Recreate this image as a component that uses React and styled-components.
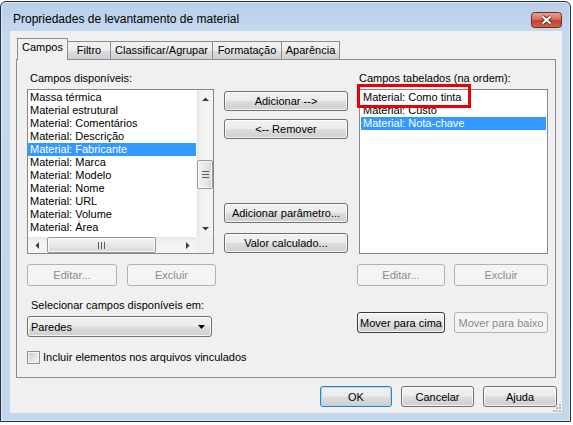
import React from "react"
import styled, { createGlobalStyle, css } from 'styled-components'

const tabs = [
    { label: "Campos", w: 51 },
    { label: "Filtro", w: 44 },
    { label: "Classificar/Agrupar", w: 103 },
    { label: "Formatação", w: 70 },
    { label: "Aparência", w: 59 },
]

const available = [
    "Massa térmica",
    "Material estrutural",
    "Material: Comentários",
    "Material: Descrição",
    "Material: Fabricante",
    "Material: Marca",
    "Material: Modelo",
    "Material: Nome",
    "Material: URL",
    "Material: Volume",
    "Material: Área",
]

const scheduled = ["Material: Como tinta", "Material: Custo", "Material: Nota-chave"]

const arrows = {
    up: "M0 4 L3.5 0.5 L7 4 Z",
    down: "M0 0 L7 0 L3.5 3.5 Z",
    left: "M4 0 L4 7 L0.5 3.5 Z",
    right: "M0 0 L3.5 3.5 L0 7 Z",
}

const Arrow = ({ dir }) => {
    const vertical = dir === "up" || dir === "down"
    return (
        <ArrowBox>
            <svg width={vertical ? 7 : 4} height={vertical ? 4 : 7}>
                <path d={arrows[dir]} fill="#3a3a3a" />
            </svg>
        </ArrowBox>
    )
}

const App = () => {
    return (
        <>
            <GlobalStyle />
            <Window>
                <TitleBar>
                    <Title>Propriedades de levantamento de material</Title>
                    <CloseButton aria-label="Fechar">
                        <svg width="31" height="16" viewBox="0 0 31 16">
                            <defs>
                                <linearGradient id="closeFill" x1="0" y1="0" x2="0" y2="1">
                                    <stop offset="0" stopColor="#e8a597" />
                                    <stop offset="0.45" stopColor="#d6705e" />
                                    <stop offset="0.55" stopColor="#c5412c" />
                                    <stop offset="1" stopColor="#d0654c" />
                                </linearGradient>
                            </defs>
                            <rect x="0.5" y="0.5" width="30" height="15" rx="3" fill="url(#closeFill)" stroke="#6e2b22" />
                            <path d="M11.5 4.5 L19.5 11.5 M19.5 4.5 L11.5 11.5" stroke="#5a2f2a" strokeWidth="4" />
                            <path d="M11.5 4.5 L19.5 11.5 M19.5 4.5 L11.5 11.5" stroke="#ffffff" strokeWidth="2.2" />
                        </svg>
                    </CloseButton>
                </TitleBar>

                <Client>
                    <TabStrip>
                        {tabs.map((t, i) => (
                            <Tab key={t.label} $active={i === 0} $w={t.w}>{t.label}</Tab>
                        ))}
                    </TabStrip>

                    <Pane>
                        <LeftCol>
                            <Label $indent={3}>Campos disponíveis:</Label>
                            <ListBox $w={187} $scroll>
                                <Items>
                                    {available.map(item => (
                                        <Item key={item} $selected={item === "Material: Fabricante"}>{item}</Item>
                                    ))}
                                </Items>
                                <VScroll>
                                    <Arrow dir="up" />
                                    <VTrack>
                                        <VThumb>
                                            <svg width="7" height="7">
                                                <path d="M0 0.5 H7 M0 3.5 H7 M0 6.5 H7" stroke="#5c5c5c" />
                                            </svg>
                                        </VThumb>
                                    </VTrack>
                                    <Arrow dir="down" />
                                </VScroll>
                                <HScroll>
                                    <Arrow dir="left" />
                                    <HTrack>
                                        <HThumb>
                                            <svg width="7" height="7">
                                                <path d="M0.5 0 V7 M3.5 0 V7 M6.5 0 V7" stroke="#5c5c5c" />
                                            </svg>
                                        </HThumb>
                                    </HTrack>
                                    <Arrow dir="right" />
                                </HScroll>
                                <Corner />
                            </ListBox>

                            <ButtonRow $gap={10}>
                                <Button $w={90} $h={22} disabled>Editar...</Button>
                                <Button $w={89} $h={22} disabled>Excluir</Button>
                            </ButtonRow>

                            <Label $indent={4} $top={12}>Selecionar campos disponíveis em:</Label>
                            <Combo>
                                <span>Paredes</span>
                                <svg width="7" height="4">
                                    <path d="M0 0 H7 L3.5 4 Z" fill="#000" />
                                </svg>
                            </Combo>

                            <CheckRow>
                                <CheckBox />
                                <span>Incluir elementos nos arquivos vinculados</span>
                            </CheckRow>
                        </LeftCol>

                        <MidCol>
                            <Button $w={124} $h={20}>Adicionar --&gt;</Button>
                            <Button $w={124} $h={20} $top={8}>&lt;-- Remover</Button>
                            <Button $w={124} $h={20} $top={64}>Adicionar parâmetro...</Button>
                            <Button $w={124} $h={20} $top={10}>Valor calculado...</Button>
                        </MidCol>

                        <RightCol>
                            <Label $indent={2}>Campos tabelados (na ordem):</Label>
                            <RightListWrap>
                                <ListBox $w={189}>
                                    <Items $inset>
                                        {scheduled.map(item => (
                                            <Item key={item} $selected={item === "Material: Nota-chave"}>{item}</Item>
                                        ))}
                                    </Items>
                                </ListBox>
                                <Highlight />
                            </RightListWrap>

                            <ButtonRow $gap={9}>
                                <Button $w={88} $h={22} disabled>Editar...</Button>
                                <Button $w={94} $h={22} disabled>Excluir</Button>
                            </ButtonRow>

                            <ButtonRow $gap={9} $top={26}>
                                <Button $w={88} $h={21} $focus>Mover para cima</Button>
                                <Button $w={94} $h={21} disabled>Mover para baixo</Button>
                            </ButtonRow>
                        </RightCol>
                    </Pane>

                    <Footer>
                        <Button $w={72} $h={21} $default>OK</Button>
                        <Button $w={73} $h={21}>Cancelar</Button>
                        <Button $w={74} $h={21}>Ajuda</Button>
                    </Footer>

                    <Grip>
                        <svg width="9" height="9">
                            <g fill="#b9b9b9">
                                <rect x="7" y="1" width="2" height="2" />
                                <rect x="4" y="4" width="2" height="2" />
                                <rect x="7" y="4" width="2" height="2" />
                                <rect x="1" y="7" width="2" height="2" />
                                <rect x="4" y="7" width="2" height="2" />
                                <rect x="7" y="7" width="2" height="2" />
                            </g>
                        </svg>
                    </Grip>
                </Client>
            </Window>
        </>
    )
}

export default App

const GlobalStyle = createGlobalStyle`
    html, body {
        margin: 0;
        background: #ffffff;
    }
    body {
        font-family: "Liberation Sans", Arial, sans-serif;
        font-size: 11px;
        color: #000;
    }
`

const Window = styled.div`
    box-sizing: border-box;
    width: 571px;
    height: 421px;
    margin-top: 1px;
    display: flex;
    flex-direction: column;
    padding: 0 8px 8px 9px;
    border: 1px solid #27323f;
    border-radius: 6px 6px 0 0;
    background: linear-gradient(180deg, #b9cfe8 0, #c4d8ee 30px, #c2d6ec 100%);
    box-shadow: inset 0 0 0 1px rgba(255, 255, 255, 0.45);
`

const TitleBar = styled.div`
    height: 29px;
    display: flex;
    align-items: flex-start;
    justify-content: space-between;
`

const Title = styled.div`
    padding: 10px 0 0 3px;
    font-size: 12px;
    line-height: 14px;
`

const CloseButton = styled.div`
    margin-top: 10px;
    width: 31px;
    height: 16px;
    line-height: 0;
`

const Client = styled.div`
    position: relative;
    box-sizing: border-box;
    height: 382px;
    padding: 7px 6px 0 6px;
    background: #f0f0f0;
    display: flex;
    flex-direction: column;
`

const TabStrip = styled.div`
    height: 21px;
    display: flex;
    align-items: flex-end;
    padding-left: 1px;
`

const Tab = styled.div`
    box-sizing: border-box;
    width: ${props => props.$w}px;
    height: 18px;
    margin-left: -1px;
    border: 1px solid #898c95;
    border-bottom: none;
    background: linear-gradient(180deg, #f3f3f3 0%, #ebebeb 50%, #dddddd 51%, #cfcfcf 100%);
    text-align: center;
    line-height: 16px;
    white-space: nowrap;
    &:first-child {
        margin-left: 0;
    }
    ${props => props.$active && css`
        position: relative;
        z-index: 2;
        height: 22px;
        margin-bottom: -1px;
        background: #f0f0f0;
        line-height: 17px;
    `}
`

const Pane = styled.div`
    box-sizing: border-box;
    height: 319px;
    border: 1px solid #898c95;
    background: #f0f0f0;
    display: flex;
    align-items: flex-start;
    padding: 11px 0 0 10px;
`

const LeftCol = styled.div`
    width: 189px;
    display: flex;
    flex-direction: column;
`

const MidCol = styled.div`
    width: 124px;
    margin-left: 8px;
    padding-top: 20px;
    display: flex;
    flex-direction: column;
`

const RightCol = styled.div`
    width: 191px;
    margin-left: 9px;
    display: flex;
    flex-direction: column;
`

const Label = styled.div`
    height: 14px;
    line-height: 14px;
    padding-left: ${props => props.$indent || 0}px;
    margin-top: ${props => props.$top || 0}px;
    margin-bottom: 4px;
    white-space: nowrap;
`

const ListBox = styled.div`
    box-sizing: border-box;
    width: ${props => props.$w}px;
    height: 165px;
    border: 1px solid #828790;
    background: #ffffff;
    display: grid;
    grid-template-columns: ${props => props.$scroll ? "1fr 17px" : "1fr"};
    grid-template-rows: ${props => props.$scroll ? "1fr 16px" : "1fr"};
    overflow: hidden;
`

const Items = styled.div`
    padding: 1px ${props => props.$inset ? "1px" : "0"} 0;
    overflow: hidden;
`

const Item = styled.div`
    height: 13px;
    line-height: 13px;
    padding-left: 2px;
    white-space: nowrap;
    ${props => props.$selected && css`
        background: #3399ff;
        color: #ffffff;
    `}
`

const VScroll = styled.div`
    display: flex;
    flex-direction: column;
    background: linear-gradient(90deg, #e6e6e6 0, #f2f2f2 30%, #f4f4f4 100%);
    border-left: 1px solid #f7f7f7;
`

const HScroll = styled.div`
    display: flex;
    background: linear-gradient(180deg, #e6e6e6 0, #f2f2f2 30%, #f4f4f4 100%);
`

const ArrowBox = styled.div`
    flex: 0 0 17px;
    height: 17px;
    display: flex;
    align-items: center;
    justify-content: center;
    line-height: 0;
    ${HScroll} & {
        height: 16px;
    }
`

const VTrack = styled.div`
    flex: 1;
    padding-top: 53px;
`

const HTrack = styled.div`
    flex: 1;
    padding-left: 2px;
`

const VThumb = styled.div`
    box-sizing: border-box;
    width: 16px;
    height: 29px;
    border: 1px solid #979797;
    border-radius: 2px;
    background: linear-gradient(90deg, #f3f3f3 0%, #e8e8e8 50%, #d6d6d6 100%);
    box-shadow: inset 0 0 0 1px rgba(255, 255, 255, 0.8);
    display: flex;
    align-items: center;
    justify-content: center;
    line-height: 0;
`

const HThumb = styled.div`
    box-sizing: border-box;
    width: 109px;
    height: 16px;
    border: 1px solid #979797;
    border-radius: 2px;
    background: linear-gradient(180deg, #f3f3f3 0%, #e8e8e8 50%, #d6d6d6 100%);
    box-shadow: inset 0 0 0 1px rgba(255, 255, 255, 0.8);
    display: flex;
    align-items: center;
    justify-content: center;
    line-height: 0;
`

const Corner = styled.div`
    background: #f0f0f0;
`

const RightListWrap = styled.div`
    position: relative;
    margin-left: 2px;
`

const Highlight = styled.div`
    position: absolute;
    left: -2px;
    top: -5px;
    box-sizing: border-box;
    width: 114px;
    height: 24px;
    border: 3px solid #e6000a;
    pointer-events: none;
`

const ButtonRow = styled.div`
    display: flex;
    gap: ${props => props.$gap}px;
    margin-top: ${props => props.$top || 10}px;
`

const Button = styled.button`
    box-sizing: border-box;
    flex: 0 0 auto;
    width: ${props => props.$w}px;
    height: ${props => props.$h}px;
    margin-top: ${props => props.$top || 0}px;
    padding: 0;
    font-family: "Liberation Sans", Arial, sans-serif;
    font-size: 11px;
    color: #000000;
    white-space: nowrap;
    border: 1px solid #707070;
    border-radius: 3px;
    background: linear-gradient(180deg, #f2f2f2 0%, #ebebeb 48%, #dddddd 52%, #cfcfcf 100%);
    box-shadow: inset 0 0 0 1px rgba(255, 255, 255, 0.75);
    ${props => props.$focus && css`
        border-color: #3a3a3a;
    `}
    ${props => props.$default && css`
        border-color: #3c7fb1;
        box-shadow: inset 0 0 0 1px #9fdcf8;
    `}
    &:disabled {
        color: #8b8b8b;
        border-color: #adb2b5;
        background: #f4f4f4;
        box-shadow: none;
    }
`

const Combo = styled.div`
    box-sizing: border-box;
    width: 185px;
    height: 21px;
    display: flex;
    align-items: center;
    justify-content: space-between;
    padding: 0 6px 0 3px;
    border: 1px solid #707070;
    border-radius: 3px;
    background: linear-gradient(180deg, #f2f2f2 0%, #ebebeb 48%, #dddddd 52%, #cfcfcf 100%);
    box-shadow: inset 0 0 0 1px rgba(255, 255, 255, 0.75);
`

const CheckRow = styled.label`
    display: flex;
    align-items: center;
    gap: 3px;
    height: 13px;
    margin-top: 14px;
    line-height: 13px;
    white-space: nowrap;
`

const CheckBox = styled.span`
    flex: 0 0 13px;
    box-sizing: border-box;
    width: 13px;
    height: 13px;
    border: 1px solid #8e8f8f;
    background: linear-gradient(135deg, #c8cbd0 0%, #e4e5e7 60%, #f4f4f4 100%);
    box-shadow: inset 0 0 0 1px #f4f4f4;
`

const Footer = styled.div`
    display: flex;
    justify-content: flex-end;
    gap: 9px;
    margin-top: 8px;
    margin-right: -1px;
`

const Grip = styled.div`
    position: absolute;
    right: 1px;
    bottom: 1px;
    line-height: 0;
`
